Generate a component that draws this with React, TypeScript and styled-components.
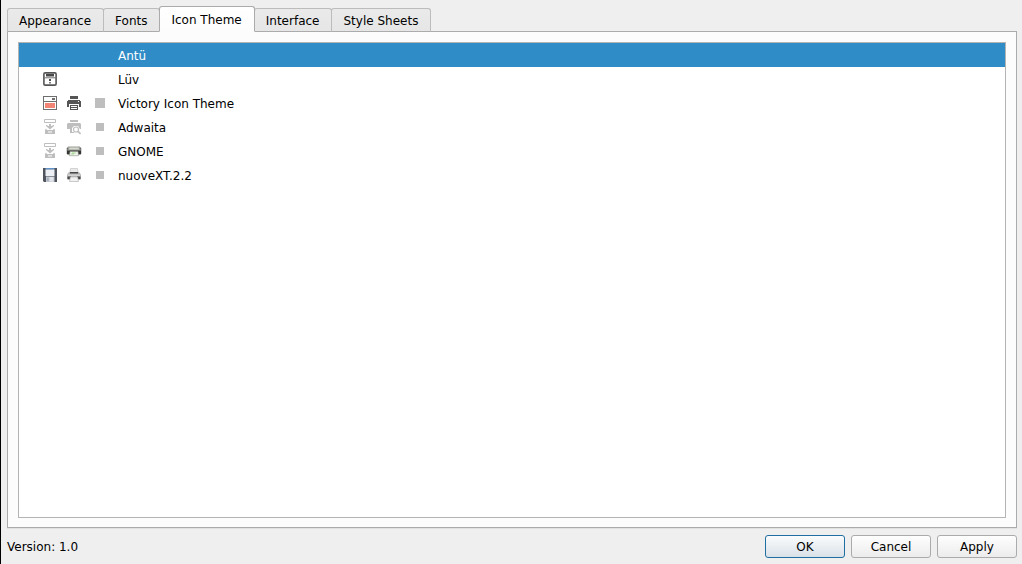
import React, { useState } from "react";
import styled, { createGlobalStyle } from "styled-components";

const GlobalStyle = createGlobalStyle`
  * { box-sizing: border-box; }
  body {
    margin: 0;
    background: #efefef;
    color: #000;
    font: 12px/16px "DejaVu Sans", sans-serif;
  }
`;

const Dialog = styled.main`
  display: flex;
  flex-direction: column;
  min-height: 100vh;
  padding: 6px 5px 6px 6px;
  border-left: 1px solid #000;
`;

const TabBar = styled.div`
  display: flex;
  align-items: flex-end;
  margin-bottom: -1px;
`;

const Tab = styled.button<{ $active: boolean }>`
  position: relative;
  height: ${(p) => (p.$active ? 26 : 24)}px;
  margin: 0 -1px 0 0;
  padding: ${(p) => (p.$active ? "2px" : "1px")} 12px 0 11px;
  border: 1px solid ${(p) => (p.$active ? "#ababab" : "#bcbcbc")};
  border-bottom-color: ${(p) => (p.$active ? "#fcfcfc" : "#ababab")};
  border-radius: 3px 3px 0 0;
  background: ${(p) => (p.$active ? "linear-gradient(#ffffff, #fcfcfc)" : "linear-gradient(#eaeaea, #e6e6e6)")};
  color: inherit;
  font: inherit;
  z-index: ${(p) => (p.$active ? 1 : 0)};
`;

const Pane = styled.section`
  display: flex;
  flex: 1;
  padding: 10px 10px 9px;
  border: 1px solid #ababab;
  background: #fcfcfc;
  box-shadow: 0 1px 0 #e2e2e2;
`;

const ThemeList = styled.ul`
  flex: 1;
  margin: 0;
  padding: 0;
  border: 1px solid #b4b4b4;
  background: #fff;
  list-style: none;
`;

const ThemeRow = styled.li<{ $selected: boolean }>`
  display: flex;
  align-items: center;
  height: 24px;
  padding-left: 23px;
  padding-top: 1px;
  background: ${(p) => (p.$selected ? "#308cc6" : "transparent")};
  color: ${(p) => (p.$selected ? "#fff" : "#000")};
`;

const Previews = styled.span`
  display: grid;
  grid-template-columns: 24px 26px 26px;
  height: 18px;
`;

const Icon = styled.svg`
  display: block;
  width: 16px;
  height: 16px;
`;

const Footer = styled.footer`
  display: flex;
  align-items: center;
  gap: 6px;
  margin-top: 7px;
`;

const Version = styled.span`
  flex: 1;
`;

const PushButton = styled.button<{ $primary?: boolean }>`
  width: 80px;
  height: 23px;
  padding: 0;
  border: 1px solid ${(p) => (p.$primary ? "#1f6fa3" : "#ababab")};
  border-radius: 3px;
  background: ${(p) => (p.$primary ? "linear-gradient(#fbfcfd, #d9e1e8)" : "linear-gradient(#fefefe, #ececec)")};
  color: inherit;
  font: inherit;
`;

const Glyph = ({ children, crisp = true }: { children: React.ReactNode; crisp?: boolean }) => (
  <Icon viewBox="0 0 16 16" aria-hidden="true" shapeRendering={crisp ? "crispEdges" : "auto"}>
    {children}
  </Icon>
);

const LuvSave = () => (
  <Glyph crisp={false}>
    <rect x="1.900" y="1.900" width="12.200" height="12.200" rx="1.200" fill="#fff" stroke="#555" strokeWidth="1.600" />
    <path fill="#484848" d="M4 3h8v2.500H4zM7 8h2v2H7zM7.300 11h1.400v1.500H7.300z" />
    <path fill="#707070" d="M2 6.300h12v1H2z" />
  </Glyph>
);

const VictorySave = () => (
  <Glyph>
    <path fill="#6e6e6e" fillRule="evenodd" d="M1 1h14v14H1zM2 2v4h12V2zM2 7v7h12V7z" />
    <path fill="#6e6e6e" d="M10 3h3v2h-3z" />
    <path fill="#f28476" d="M3 8h10v5H3z" />
  </Glyph>
);

const VictoryPrint = () => (
  <Glyph>
    <path fill="#555" d="M4 1h8v3H4zM2 5h12v1h1v6h-2V9H3v3H1V6h1zM4 10h8v5H4z" />
    <path fill="#fff" d="M12 6h1v1h-1zM5 11h6v1H5zM5 13h6v1H5z" />
  </Glyph>
);

const InstallSave = () => (
  <Glyph crisp={false}>
    <path fill="none" stroke="#bebebe" d="M2.500 .5h11v3h-11z" />
    <path fill="#bebebe" d="M7 5h2v2h1l1-1h1v1L8 10.500 4 7V6h1l1 1h1z" />
    <path fill="#bebebe" fillRule="evenodd" d="M4 9.500 3 11v4h10v-4l-1-1.500-1 1.500H5zM6 12.500v1h4v-1z" />
  </Glyph>
);

const PrintPreview = () => (
  <Glyph crisp={false}>
    <path fill="#bebebe" d="M4 1h8v2H4zM2 4h12l1 1v5h-1L12 7H8L6 9v1H1V5zM4 10h2v3h2v1H4z" />
    <circle cx="10" cy="10.500" r="2.500" fill="#fff" stroke="#bebebe" strokeWidth="1.200" />
    <path stroke="#bebebe" strokeWidth="1.600" d="m12 12.300 2.600 2.500" />
  </Glyph>
);

const GnomePrint = () => (
  <Glyph crisp={false}>
    <rect x=".8" y="4.500" width="14.400" height="7" rx="1" fill="#343633" />
    <path fill="#9a9e97" d="M2 3.500h12l1 4H1z" />
    <path fill="#d5d9d0" d="M3.500 4.500h9l.5 2H3z" />
    <path fill="#f1f5ed" stroke="#8b9086" strokeWidth=".6" d="M4 8.500h8l.5 4.200h-9z" />
    <path fill="#a6dc96" d="M6 9.500h4v1H6zM5 10.500h3v1H5z" />
  </Glyph>
);

const NuoveSave = () => (
  <Glyph crisp={false}>
    <path fill="#50545e" d="M1 1h14v14H2l-1-1z" />
    <path fill="#5f93cb" d="M3.500 1h9v1.500h-9z" />
    <path fill="#edf1f5" d="M3.500 2.500h9V9h-9z" />
    <path fill="#c2c6cd" d="M4 9.500h8.500V15H4z" />
    <path fill="#e2e6ec" d="M7.500 10h4v4.500h-4z" />
    <path fill="#a3aebf" d="M5 11h1.500v3H5z" />
  </Glyph>
);

const NuovePrint = () => (
  <Glyph crisp={false}>
    <path fill="#e9e9e9" stroke="#c4c4c4" strokeWidth=".7" d="M4.500 1.500h7l.5 4H4z" />
    <path fill="#b8b8b8" d="M3 5h10l2 2.500V12l-1 1H2l-1-1V7.500z" />
    <path fill="#484848" d="M4 5h8v1.500H4zM1.500 9.500h3.500v2.500H1.500zM11 9.500h3.500v2.500H11z" />
    <path fill="#d3d3d3" d="M2 7.500h12V9H2z" />
    <path fill="#f2f2f2" stroke="#aaa" strokeWidth=".6" d="M4.300 10h7.400l.8 4.500h-9z" />
  </Glyph>
);

const Swatch = ({ size }: { size: number }) => (
  <Glyph>
    <rect x={8 - size / 2} y={8 - size / 2} width={size} height={size} fill="#bebebe" />
  </Glyph>
);

const themes: { name: string; icons: React.ReactNode[] }[] = [
  { name: "Antü", icons: [] },
  { name: "Lüv", icons: [<LuvSave key="save" />] },
  { name: "Victory Icon Theme", icons: [<VictorySave key="save" />, <VictoryPrint key="print" />, <Swatch key="swatch" size={10} />] },
  { name: "Adwaita", icons: [<InstallSave key="save" />, <PrintPreview key="print" />, <Swatch key="swatch" size={8} />] },
  { name: "GNOME", icons: [<InstallSave key="save" />, <GnomePrint key="print" />, <Swatch key="swatch" size={8} />] },
  { name: "nuoveXT.2.2", icons: [<NuoveSave key="save" />, <NuovePrint key="print" />, <Swatch key="swatch" size={8} />] },
];

const tabs = ["Appearance", "Fonts", "Icon Theme", "Interface", "Style Sheets"];

export default function App() {
  const [tab, setTab] = useState("Icon Theme");
  const [theme, setTheme] = useState("Antü");
  return (
    <>
      <GlobalStyle />
      <Dialog>
        <TabBar role="tablist">
          {tabs.map((name) => (
            <Tab key={name} type="button" role="tab" aria-selected={tab === name} $active={tab === name} onClick={() => setTab(name)}>
              {name}
            </Tab>
          ))}
        </TabBar>
        <Pane role="tabpanel" aria-label={tab}>
          <ThemeList role="listbox" aria-label="Icon themes">
            {themes.map(({ name, icons }) => (
              <ThemeRow key={name} role="option" aria-selected={theme === name} $selected={theme === name} onClick={() => setTheme(name)}>
                <Previews>{icons}</Previews>
                {name}
              </ThemeRow>
            ))}
          </ThemeList>
        </Pane>
        <Footer>
          <Version>Version: 1.0</Version>
          <PushButton type="button" $primary>OK</PushButton>
          <PushButton type="button">Cancel</PushButton>
          <PushButton type="button">Apply</PushButton>
        </Footer>
      </Dialog>
    </>
  );
}
